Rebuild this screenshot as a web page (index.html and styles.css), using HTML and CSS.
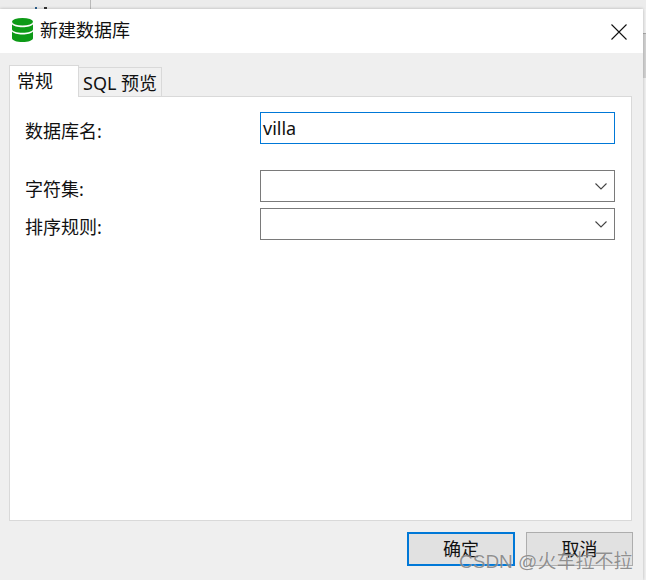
FILE: index.html
```html
<!DOCTYPE html>
<html lang="zh-CN">
<head>
  <meta charset="UTF-8">
  <meta name="viewport" content="width=device-width, initial-scale=1.0">
  <title>新建数据库</title>
  <link rel="stylesheet" href="styles.css">
</head>
<body>

  <!-- Window behind the dialog, only its lower edge shows -->
  <div class="behind">
    <span class="speck speck-a"></span>
    <span class="speck speck-b"></span>
    <span class="behind-line"></span>
  </div>

  <div class="window">
    <div class="dialog">
      <div class="titlebar">
        <svg class="db-icon" width="21" height="24" viewBox="0 0 21 24">
          <ellipse cx="10.500" cy="3.800" rx="10.500" ry="3.800" fill="#0d9a17"/>
          <path d="M0 6.200c1.500 2 5.500 3 10.500 3s9-1 10.500-3v5c0 2.100-4.700 3.600-10.500 3.600s-10.500-1.500-10.500-3.600z" fill="#0d9a17"/>
          <path d="M0 13.600c1.500 2 5.500 3 10.500 3s9-1 10.500-3v6.600c0 2.100-4.700 3.800-10.500 3.800s-10.500-1.700-10.500-3.800z" fill="#0d9a17"/>
        </svg>
        <span class="title">新建数据库</span>
        <svg class="close" width="16" height="16" viewBox="0 0 16 16">
          <path d="M0.500 0.500L15.500 15.500M15.500 0.500L0.500 15.500" stroke="#111" stroke-width="1.100" fill="none"/>
        </svg>
      </div>

      <div class="body">
        <div class="tabs">
          <div class="tab active">常规</div>
          <div class="tab">SQL 预览</div>
        </div>

        <div class="panel">
          <div class="row row-name">
            <label>数据库名:</label>
            <div class="input focused">villa</div>
          </div>
          <div class="row row-charset">
            <label>字符集:</label>
            <div class="input">
              <svg class="chevron" width="12" height="7" viewBox="0 0 12 7"><path d="M0.500 0.500L6 6L11.500 0.500" stroke="#444" stroke-width="1.100" fill="none"/></svg>
            </div>
          </div>
          <div class="row row-collation">
            <label>排序规则:</label>
            <div class="input">
              <svg class="chevron" width="12" height="7" viewBox="0 0 12 7"><path d="M0.500 0.500L6 6L11.500 0.500" stroke="#444" stroke-width="1.100" fill="none"/></svg>
            </div>
          </div>
        </div>

        <div class="actions">
          <button class="btn primary">确定</button>
          <button class="btn secondary">取消</button>
        </div>
      </div>
    </div>

    <!-- Scrollbar of the window behind -->
    <div class="side">
      <span class="side-line"></span>
      <span class="side-thumb"></span>
    </div>
  </div>

  <div class="watermark">CSDN @火车拉不拉</div>

</body>
</html>
```

FILE: styles.css
```css
html, body {
  margin: 0;
  height: 100%;
}

body {
  width: 646px;
  height: 580px;
  overflow: hidden;
  position: relative;
  background-color: #f0f0f0;
  font-family: "Noto Sans", "Noto Sans CJK SC", sans-serif;
  color: #111;
}

.behind {
  height: 9px;
  background-color: #ececec;
  display: flex;
  align-items: flex-end;
  overflow: hidden;
}

.speck {
  height: 2px;
  background-color: #333;
}

.speck-a {
  width: 2px;
  margin-left: 35px;
  background-color: #2b5f8f;
}

.speck-b {
  width: 3px;
  margin-left: 7px;
  margin-right: 43px;
}

.behind-line {
  width: 1px;
  height: 9px;
  background-color: #b9b9b9;
}

.window {
  display: flex;
  height: 571px;
}

.dialog {
  width: 643px;
  height: 571px;
  background-color: #efefef;
  box-shadow: 0 0 3px rgba(0, 0, 0, 0.25);
  position: relative;
}

.side {
  flex: 1;
  display: flex;
  flex-direction: column;
}

.side-line {
  height: 1px;
  margin-top: 24px;
  background-color: #a8a8a8;
}

.side-thumb {
  height: 44px;
  background-color: #d2d2d2;
}

.titlebar {
  height: 44px;
  background-color: white;
  display: flex;
  align-items: center;
  padding: 0 16px 0 12px;
}

.db-icon {
  margin-right: 7px;
  margin-bottom: 2px;
}

.title {
  font-size: 18px;
  line-height: 24px;
  padding-bottom: 2px;
  flex: 1;
}

.close {
  margin-top: 1px;
}

.body {
  padding: 12px 11px 0 9px;
}

.tabs {
  display: flex;
  align-items: flex-end;
  height: 32px;
  margin-bottom: -1px;
  position: relative;
}

.tab {
  box-sizing: border-box;
  height: 30px;
  padding: 0 4px;
  font-size: 18px;
  line-height: 30px;
  white-space: nowrap;
  background-color: #f0f0f0;
  border: 1px solid #d9d9d9;
  border-left: none;
}

.tab.active {
  width: 70px;
  height: 32px;
  padding: 0 7px;
  line-height: 31px;
  background-color: white;
  border-left: 1px solid #d9d9d9;
  border-bottom: none;
}

.panel {
  box-sizing: border-box;
  height: 425px;
  background-color: white;
  border: 1px solid #d9d9d9;
}

.row {
  display: flex;
  justify-content: space-between;
  align-items: center;
  padding: 0 16px 0 15px;
}

.row-name {
  margin-top: 15px;
}

.row-charset {
  margin-top: 26px;
}

.row-collation {
  margin-top: 6px;
}

.row label {
  font-size: 18px;
  line-height: 24px;
  padding-top: 6px;
}

.input {
  box-sizing: border-box;
  width: 355px;
  height: 32px;
  padding: 0 2px;
  display: flex;
  align-items: center;
  justify-content: flex-end;
  border: 1px solid #7a7a7a;
  font-size: 18px;
}

.input.focused {
  justify-content: flex-start;
  border-color: #0078d7;
}

.chevron {
  margin-right: 5px;
}

.actions {
  display: flex;
  justify-content: flex-end;
  gap: 11px;
  margin-top: 11px;
  margin-right: -1px;
}

.btn {
  box-sizing: border-box;
  width: 108px;
  height: 34px;
  padding: 0;
  background-color: #e1e1e1;
  border: 1px solid #adadad;
  font-family: inherit;
  font-size: 18px;
  line-height: 24px;
  color: #111;
}

.btn.secondary {
  width: 107px;
}

.btn.primary {
  border: 2px solid #0078d7;
}

.watermark {
  position: absolute;
  left: 459px;
  top: 550px;
  font-family: "Liberation Sans", "Noto Sans CJK SC", sans-serif;
  font-size: 19px;
  line-height: 23px;
  color: rgba(110, 110, 110, 0.75);
  text-shadow: 0 0 1px rgba(255, 255, 255, 0.7);
  white-space: nowrap;
}
```
